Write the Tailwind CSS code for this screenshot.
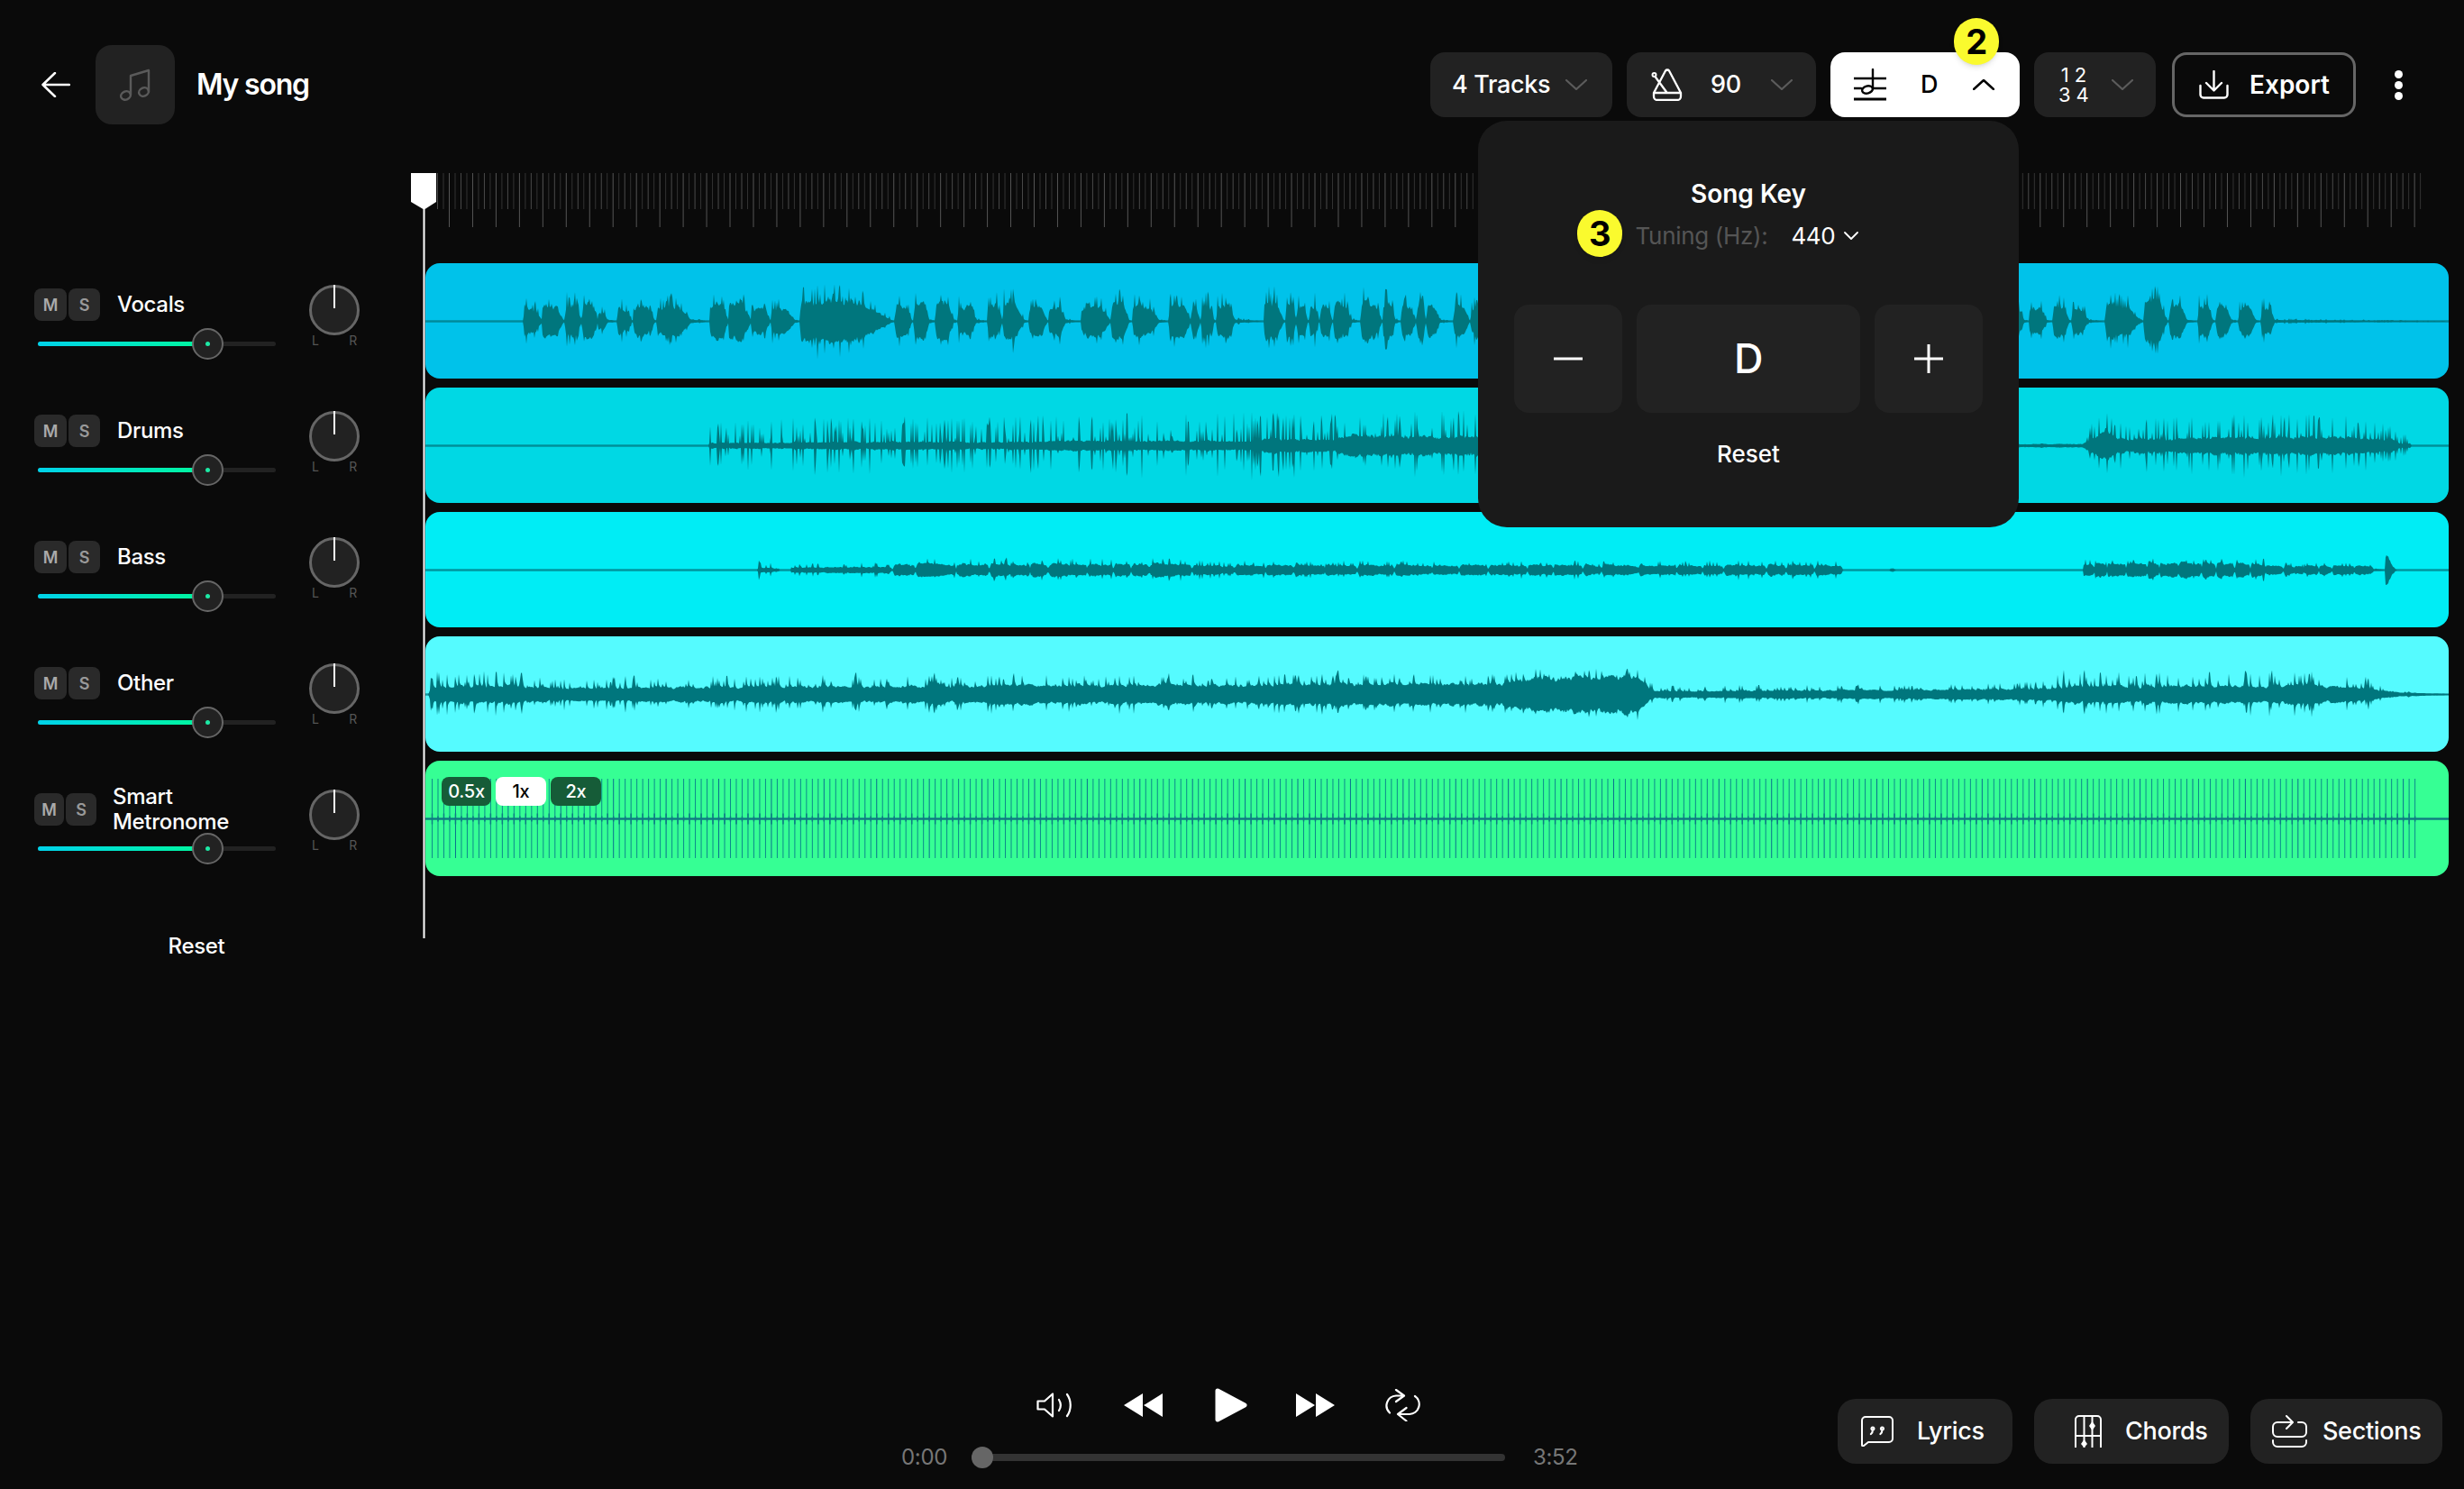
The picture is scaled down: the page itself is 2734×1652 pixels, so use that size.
<!DOCTYPE html>
<html lang="en">
<head>
    <meta charset="UTF-8">
    <title>My song</title>
    <script src="https://cdn.jsdelivr.net/npm/@tailwindcss/browser@4"></script>
</head>
<body class="bg-[#0a0a0a] overflow-hidden">
<div class="relative flex h-[1652px] w-[2734px] flex-col font-['Inter',sans-serif] tracking-[-0.02em] text-white">

    <!-- header -->
    <header class="mt-[50px] flex h-[88px] shrink-0 items-center pl-[46px] pr-[68px]">
        <svg class="h-[28px] w-[32px]" viewBox="0 0 32 28" fill="none" stroke="white" stroke-width="2.5" stroke-linecap="round" stroke-linejoin="round"><path d="M31 14H1.5M15 1 1.5 14 15 27"/></svg>
        <div class="ml-[28px] flex h-[88px] w-[88px] items-center justify-center rounded-[18px] bg-[#222222]">
            <svg class="h-[36px] w-[36px]" viewBox="0 0 36 36" fill="none" stroke="#5a5a5a" stroke-width="2.4" stroke-linecap="round" stroke-linejoin="round"><path d="M13 29V8l20-6v24"/><ellipse cx="7.5" cy="30" rx="5.5" ry="4.5" transform="rotate(-25 7.5 30)"/><ellipse cx="27.500" cy="26" rx="5.500" ry="4.500" transform="rotate(-25 27.500 26)"/></svg>
        </div>
        <h1 class="ml-[24px] text-[32px] font-semibold tracking-[-1.2px]">My song</h1>

        <div class="ml-auto flex items-center">
            <button class="flex h-[72px] w-[202px] items-center justify-between rounded-[16px] bg-[#222222] pl-[24px] pr-[28px] text-[27px] font-medium">
                4 Tracks
                <svg class="h-[12px] w-[24px]" viewBox="0 0 24 12" fill="none" stroke="#5c5c5c" stroke-width="2.2" stroke-linecap="round" stroke-linejoin="round"><path d="m1 1 11 10L23 1"/></svg>
            </button>
            <button class="ml-[16px] flex h-[72px] w-[210px] items-center rounded-[16px] bg-[#222222] pl-[27px] text-[27px] font-medium">
                <svg class="h-[36px] w-[36px]" viewBox="0 0 36 36" fill="none" stroke="white" stroke-width="2.3" stroke-linecap="round" stroke-linejoin="round"><path d="M16 2.500a2.500 2.500 0 0 1 4 0L33 27v4a4 4 0 0 1-4 4H7a4 4 0 0 1-4-4v-4zM3 27h30M4.500 9 17 26"/><circle cx="3.500" cy="7" r="2" stroke-width="2"/></svg>
                <span class="ml-[30px]">90</span>
                <svg class="ml-[33px] h-[12px] w-[24px]" viewBox="0 0 24 12" fill="none" stroke="#5c5c5c" stroke-width="2.2" stroke-linecap="round" stroke-linejoin="round"><path d="m1 1 11 10L23 1"/></svg>
            </button>
            <button class="ml-[16px] flex h-[72px] w-[210px] items-center rounded-[16px] bg-white pl-[26px] text-[27px] font-medium text-black">
                <svg class="h-[36px] w-[36px]" viewBox="0 0 36 36" fill="none" stroke="black" stroke-width="2.4" stroke-linecap="round"><path d="M0 11h36M0 22h8M21 22h15"/><path d="M0 34h36" stroke-width="2.8"/><path d="M21 1v21"/><ellipse cx="15" cy="23.500" rx="6" ry="4" transform="rotate(-15 15 23.500)"/></svg>
                <span class="ml-[38px]">D</span>
                <svg class="ml-[39px] h-[12px] w-[24px]" viewBox="0 0 24 12" fill="none" stroke="black" stroke-width="2.5" stroke-linecap="round" stroke-linejoin="round"><path d="M1 11 12 1l11 10"/></svg>
            </button>
            <button class="ml-[16px] flex h-[72px] w-[135px] items-center rounded-[16px] bg-[#222222] pl-[27px] text-[22px] leading-[22px]">
                <span class="flex flex-col"><span class="tracking-[6px]">12</span><span class="tracking-[6px]">34</span></span>
                <svg class="ml-[19px] h-[12px] w-[24px]" viewBox="0 0 24 12" fill="none" stroke="#5c5c5c" stroke-width="2.2" stroke-linecap="round" stroke-linejoin="round"><path d="m1 1 11 10L23 1"/></svg>
            </button>
            <button class="ml-[18px] flex h-[72px] w-[204px] items-center rounded-[16px] border-[3px] border-[#666666] pl-[27px] text-[28px] font-semibold tracking-normal">
                <svg class="h-[32px] w-[33px]" viewBox="0 0 33 32" fill="none" stroke="white" stroke-width="2.4" stroke-linecap="round" stroke-linejoin="round"><path d="M16.500 1v21M8 14l8.500 8.500L25 14M1.500 17v10a3.500 3.500 0 0 0 3.500 3.500h23a3.500 3.500 0 0 0 3.500-3.500V17"/></svg>
                <span class="ml-[23px]">Export</span>
            </button>
            <div class="ml-[43px] flex flex-col gap-[3px]">
                <span class="h-[9px] w-[9px] rounded-full bg-white"></span>
                <span class="h-[9px] w-[9px] rounded-full bg-white"></span>
                <span class="h-[9px] w-[9px] rounded-full bg-white"></span>
            </div>
        </div>
    </header>

    <main class="flex min-h-0 flex-1">
        <!-- mixer -->
        <aside class="w-[472px] shrink-0 pt-[178px]">
            <div id="mixer"></div>
            <div class="mt-[17px] w-[436px] text-center text-[24px] font-medium leading-[34px]">Reset</div>
        </aside>

        <!-- timeline -->
        <section class="relative mt-[54px] w-[2245px]">
            <svg id="ruler" class="block h-[60px] w-[2245px]" viewBox="0 0 2245 60"></svg>
            <div class="mt-[40px] flex flex-col gap-[10px]">
                <div class="h-[128px] overflow-hidden rounded-[16px] bg-[#00c2ea]"><svg id="w1" class="block h-full w-full" viewBox="0 0 2245 128"></svg></div>
                <div class="h-[128px] overflow-hidden rounded-[16px] bg-[#00d8e4]"><svg id="w2" class="block h-full w-full" viewBox="0 0 2245 128"></svg></div>
                <div class="h-[128px] overflow-hidden rounded-[16px] bg-[#00edf5]"><svg id="w3" class="block h-full w-full" viewBox="0 0 2245 128"></svg></div>
                <div class="h-[128px] overflow-hidden rounded-[16px] bg-[#55fbff]"><svg id="w4" class="block h-full w-full" viewBox="0 0 2245 128"></svg></div>
                <div class="relative h-[128px] overflow-hidden rounded-[16px] bg-[#36ff94]">
                    <svg id="w5" class="block h-full w-full" viewBox="0 0 2245 128"></svg>
                    <div class="absolute left-[18px] top-[18px] flex gap-[5px] text-[20px] font-medium">
                        <span class="flex h-[32px] w-[55px] items-center justify-center rounded-[8px] bg-[#165c38]">0.5x</span>
                        <span class="flex h-[32px] w-[56px] items-center justify-center rounded-[8px] bg-white text-black">1x</span>
                        <span class="flex h-[32px] w-[56px] items-center justify-center rounded-[8px] bg-[#165c38]">2x</span>
                    </div>
                </div>
            </div>
            <!-- playhead -->
            <svg class="absolute left-[-16px] top-0 h-[849px] w-[28px]" viewBox="0 0 28 849"><path d="M0 0h28v32L15.500 40v809h-2V40L0 32z" fill="white"/></svg>
        </section>
    </main>

    <!-- transport -->
    <footer class="flex h-[112px] shrink-0 pl-[1000px]">
        <div class="flex w-[760px] flex-col">
            <div class="ml-[150px] flex h-[38px] items-center">
                <svg class="h-[28px] w-[41px]" viewBox="0 0 41 28" fill="none" stroke="white" stroke-width="2.200" stroke-linecap="round" stroke-linejoin="round"><path d="M1.500 9.500H9L18 1.500v25l-9-8H1.500zM25 8c2.500 4 2.500 8 0 12M34 2c5 7 5 17 0 24"/></svg>
                <svg class="ml-[56px] h-[26px] w-[43px]" viewBox="0 0 43 26" fill="white"><path d="M21 0v26L0 13zM43 0v26L22 13z"/></svg>
                <svg class="ml-[58px] h-[38px] w-[36px]" viewBox="0 0 36 38" fill="white" stroke="white" stroke-width="5" stroke-linejoin="round"><path d="M3 3l30 16L3 35z"/></svg>
                <svg class="ml-[54px] h-[26px] w-[43px]" viewBox="0 0 43 26" fill="white"><path d="M0 0v26l21-13zM22 0v26l21-13z"/></svg>
                <svg class="ml-[55px] h-[36px] w-[40px]" viewBox="0 0 40 36" fill="none" stroke="white" stroke-width="2.200" stroke-linecap="round" stroke-linejoin="round"><path d="M13 1l9 6.500L13 14M21 7.500H13a11 11 0 0 0-7 19M24.500 21 15 28l9.500 7.500M16 28h12a11 11 0 0 0 6-20"/></svg>
            </div>
            <div class="mt-[27px] flex h-[24px] items-center text-[24px] text-[#777777]">
                <span class="w-[78px] shrink-0">0:00</span>
                <div class="relative h-[8px] w-[592px] shrink-0 rounded-full bg-[#333333]">
                    <span class="absolute left-0 top-[-8px] h-[24px] w-[24px] rounded-full bg-[#666666]"></span>
                </div>
                <span class="ml-[31px]">3:52</span>
            </div>
        </div>

        <div class="ml-[279px] mt-[12px] flex h-[72px] gap-[24px] text-[27px] font-medium">
            <button class="flex h-[72px] w-[194px] items-center rounded-[20px] bg-[#222222] pl-[26px]">
                <svg class="h-[34px] w-[36px]" viewBox="0 0 36 34" fill="none" stroke="white" stroke-width="2" stroke-linecap="round" stroke-linejoin="round"><path d="M5 1h26a4 4 0 0 1 4 4v20a4 4 0 0 1-4 4H8l-5 4a1.200 1.200 0 0 1-2-1V5a4 4 0 0 1 4-4z"/><path d="M13 15.500a1.500 1.500 0 1 0-.1 0c0 2-.8 3.500-2 4.500M23.500 15.500a1.500 1.500 0 1 0-.1 0c0 2-.8 3.500-2 4.500" stroke-width="2.200"/></svg>
                <span class="ml-[26px]">Lyrics</span>
            </button>
            <button class="flex h-[72px] w-[216px] items-center rounded-[20px] bg-[#222222] pl-[45px]">
                <svg class="h-[36px] w-[30px]" viewBox="0 0 30 36" fill="none" stroke="white" stroke-width="2"><path d="M1 36V5a4 4 0 0 1 4-4h20a4 4 0 0 1 4 4v31M10.500 1v35M19.500 1v35M1 23h28"/><path d="M19.500 7l3.500 5-3.500 5-3.500-5zM10.500 27l3.500 5-3.500 4-3.500-4z" fill="white" stroke="none"/></svg>
                <span class="ml-[26px]">Chords</span>
            </button>
            <button class="flex h-[72px] w-[213px] items-center rounded-[20px] bg-[#222222] pl-[24px]">
                <svg class="h-[36px] w-[39px]" viewBox="0 0 39 36" fill="none" stroke="white" stroke-width="2" stroke-linecap="round" stroke-linejoin="round"><path d="M22 8H6a5 5 0 0 0-5 5v6a5 5 0 0 0 5 5h27a5 5 0 0 0 5-5v-6a5 5 0 0 0-5-5h-4M16 1l7 7-7 7M1 28v2a5 5 0 0 0 5 5h27a5 5 0 0 0 5-5v-2"/></svg>
                <span class="ml-[17px]">Sections</span>
            </button>
        </div>
    </footer>

    <!-- song key popover -->
    <div class="absolute left-[1640px] top-[134px] flex h-[451px] w-[600px] flex-col items-center rounded-[32px] bg-[#1a1a1a] pt-[64px]">
        <h2 class="text-[28px] font-semibold leading-[34px] tracking-normal">Song Key</h2>
        <div class="mt-[12px] flex h-[34px] items-center pr-[3px] text-[26px]">
            <span class="text-[#555555]">Tuning (Hz):</span>
            <span class="ml-[26px]">440</span>
            <svg class="ml-[10px] h-[9px] w-[16px]" viewBox="0 0 16 9" fill="none" stroke="white" stroke-width="1.800" stroke-linecap="round" stroke-linejoin="round"><path d="m1 1 7 7 7-7"/></svg>
        </div>
        <div class="mt-[60px] flex gap-[16px]">
            <button class="flex h-[120px] w-[120px] items-center justify-center rounded-[16px] bg-[#222222]"><svg class="h-[32px] w-[32px]" viewBox="0 0 32 32" stroke="white" stroke-width="3"><path d="M0 16h32"/></svg></button>
            <button class="flex h-[120px] w-[248px] items-center justify-center rounded-[16px] bg-[#222222] text-[45px] font-medium">D</button>
            <button class="flex h-[120px] w-[120px] items-center justify-center rounded-[16px] bg-[#222222]"><svg class="h-[32px] w-[32px]" viewBox="0 0 32 32" stroke="white" stroke-width="3"><path d="M0 16h32M16 0v32"/></svg></button>
        </div>
        <div class="mt-[29px] text-[26px] font-medium leading-[34px] tracking-normal">Reset</div>
    </div>

    <!-- annotation badges -->
    <span class="absolute left-[2168px] top-[20px] flex h-[52px] w-[50px] items-center justify-center rounded-full bg-[#fafa2e] text-[38px] font-bold text-black shadow-md">2</span>
    <span class="absolute left-[1750px] top-[233px] flex h-[52px] w-[50px] items-center justify-center rounded-full bg-[#fafa2e] text-[38px] font-bold text-black shadow-md">3</span>
</div>

<template id="row">
    <div class="flex h-[140px] pl-[38px]">
        <div class="w-[268px] pt-[4px]">
            <div class="flex h-[36px] items-center gap-[2px] text-[18px] font-semibold">
                <span data-m class="flex h-[36px] w-[36px] shrink-0 items-center justify-center rounded-[8px] bg-[#2a2a2a] text-[#aaaaaa]">M</span>
                <span data-s class="flex h-[36px] w-[35px] shrink-0 items-center justify-center rounded-[8px] bg-[#2a2a2a] text-[#999999]">S</span>
                <span data-name class="ml-[17px] text-[24px] font-medium leading-[28px] text-white"></span>
            </div>
            <div class="relative ml-[4px] mt-[8px] flex h-[35px] w-[264px] items-center">
                <div class="h-[5px] w-full rounded-full bg-[#222222]">
                    <div class="h-full w-[175px] rounded-full bg-gradient-to-r from-[#00d2ea] to-[#00f5a0]"></div>
                </div>
                <span class="absolute left-[171px] top-0 flex h-[35px] w-[35px] items-center justify-center rounded-full border-2 border-[#666666] bg-[#222222]"><span class="h-[5px] w-[5px] rounded-full bg-[#1de9a5]"></span></span>
            </div>
        </div>
        <div class="ml-[37px] w-[56px]">
            <div class="relative h-[56px] w-[56px] rounded-full border-[3px] border-[#666666] bg-[#222222]">
                <span class="absolute left-[24px] top-[-3px] h-[26px] w-[2px] bg-white"></span>
            </div>
            <div class="mt-[-1px] flex justify-between px-[3px] text-[14px] leading-[14px] text-[#555555]"><span>L</span><span>R</span></div>
        </div>
    </div>
</template>

<script>
// mixer rows
var names = ['Vocals', 'Drums', 'Bass', 'Other', 'Smart Metronome'];
var mixer = document.getElementById('mixer');
var tpl = document.getElementById('row');
names.forEach(function (n, i) {
    var row = tpl.content.cloneNode(true);
    var label = row.querySelector('[data-name]');
    label.textContent = n;
    if (i === 4) {
        row.querySelector('[data-m]').className = 'flex h-[36px] w-[33px] shrink-0 items-center justify-center rounded-[8px] bg-[#2a2a2a] text-[#aaaaaa]';
        row.querySelector('[data-s]').className = 'flex h-[36px] w-[34px] shrink-0 items-center justify-center rounded-[8px] bg-[#2a2a2a] text-[#999999]';
        label.className = 'ml-[16px] w-[140px] text-[24px] font-medium leading-[28px] text-white';
    }
    mixer.appendChild(row);
});

// ruler ticks
var NS = 'http://www.w3.org/2000/svg';
function add(svg, tag, attrs) {
    var el = document.createElementNS(NS, tag);
    for (var k in attrs) el.setAttribute(k, attrs[k]);
    svg.appendChild(el);
    return el;
}
var ruler = document.getElementById('ruler');
for (var i = -2; 498 + i * 6.49 < 2686; i++) {
    var x = 498 + i * 6.49 - 472;
    var major = ((i % 4) + 4) % 4 === 0;
    add(ruler, 'rect', { x: x.toFixed(2), y: 0, width: 1, height: major ? 60 : 40, fill: major ? '#555' : (i % 2 === 0 ? '#4a4a4a' : '#333') });
}

// waveforms, generated from seeded noise so they stay the same each run
function rng(seed) {
    return function () {
        seed = (seed * 1664525 + 1013904223) % 4294967296;
        return seed / 4294967296;
    };
}
function env(pts, x) {
    for (var i = 1; i < pts.length; i++) {
        if (x <= pts[i][0]) {
            var a = pts[i - 1], b = pts[i], t = (x - a[0]) / ((b[0] - a[0]) || 1);
            if (t < 0) return [0, 0];
            return [a[1] + (b[1] - a[1]) * t, a[2] + (b[2] - a[2]) * t];
        }
    }
    return [0, 0];
}
function burst(x0, x1, a) {
    var w = x1 - x0;
    return [[x0 - 0.5, 0, 0], [x0 + 0.5, a * 0.5, a * 1.05], [x0 + w * 0.2, a * 0.58, a * 1.05], [x0 + w * 0.65, a * 0.55, a], [x1, a * 0.06, a * 0.15]];
}
function bursts(list) {
    var out = [[0, 0, 0]];
    list.forEach(function (b) { out = out.concat(burst(b[0], b[1], b[2])); });
    out.push([2734, 0, 0]);
    return out;
}
function drawWave(id, pts, p, smooth, seed) {
    var svg = document.getElementById(id), r = rng(seed), top = [], bot = [], pt = 0, pb = 0, slow = 0.5;
    for (var x = 472; x <= 2717; x++) {
        var e = env(pts, x), core = e[0], spike = e[1];
        slow = slow * 0.72 + r() * 0.28;
        var m = 0.55 + 0.9 * slow;
        var t = core * m * (0.8 + 0.2 * r()), b = core * m * (0.8 + 0.2 * r());
        if (r() < p) { var s = Math.sqrt(r()); t = Math.max(t, spike * s); if (r() < 0.75) b = Math.max(b, spike * s * (0.7 + 0.35 * r())); }
        pt = pt * smooth + t * (1 - smooth);
        pb = pb * smooth + b * (1 - smooth);
        top.push(pt); bot.push(pb);
    }
    var d = 'M0 64.500';
    top.forEach(function (v, i) { d += 'L' + i + ' ' + (64.5 - v).toFixed(1); });
    for (var j = bot.length - 1; j >= 0; j--) d += 'L' + j + ' ' + (64.5 + bot[j]).toFixed(1);
    add(svg, 'rect', { x: 0, y: 63.3, width: 2245, height: 2.4, fill: '#00767d', opacity: 0.75 });
    add(svg, 'path', { d: d + 'Z', fill: '#00767d' });
}

drawWave('w1', bursts([
    [581, 601, 26], [601, 625, 30], [627, 645, 34], [646, 663, 32], [663, 674, 20], [685, 701, 26], [703, 726, 32], [729, 766, 32],
    [788, 808, 36], [808, 833, 38], [833, 855, 24], [855, 882, 26], [888, 987, 42], [993, 1011, 36], [1014, 1031, 36], [1038, 1058, 36],
    [1063, 1083, 32], [1096, 1112, 34], [1113, 1136, 38], [1142, 1162, 32], [1164, 1182, 30],
    [1200, 1232, 30], [1233, 1252, 38], [1257, 1286, 32], [1297, 1321, 32], [1322, 1332, 26], [1333, 1347, 34], [1350, 1370, 34],
    [1403, 1424, 40], [1427, 1438, 36], [1439, 1451, 34], [1453, 1463, 34], [1465, 1478, 34], [1480, 1500, 36],
    [1510, 1533, 38], [1535, 1548, 36], [1555, 1570, 34], [1572, 1582, 36], [1583, 1597, 30], [1613, 1630, 32], [1632, 1650, 30],
    [2230, 2246, 25], [2252, 2271, 26], [2278, 2296, 32], [2299, 2317, 26], [2336, 2374, 32], [2379, 2404, 44], [2407, 2427, 30],
    [2439, 2455, 32], [2459, 2476, 30], [2484, 2503, 30], [2509, 2524, 26]
]), 0.45, 0.08, 11);

drawWave('w2', [[0, 0, 0], [786, 0, 0], [787, 3, 28], [900, 4, 32], [1000, 5, 34], [1100, 4, 32], [1200, 6, 36], [1390, 5, 38], [1392, 9, 38], [1480, 7, 36], [1490, 12, 38], [1641, 11, 40],
    [2240, 2, 2], [2310, 2, 2], [2322, 8, 30], [2335, 16, 40], [2360, 8, 30], [2500, 10, 38], [2600, 10, 38], [2655, 7, 22], [2662, 3, 14], [2674, 3, 14], [2676, 0, 0], [2734, 0, 0]], 0.3, 0, 23);

var bass = [[0, 0, 0], [840, 0, 0], [841, 3, 14], [862, 2, 10], [865, 0, 0], [877, 0, 0], [878, 3, 9], [987, 4, 9], [990, 0, 0]];
var br = rng(7), bx = 993;
while (bx < 2040) {
    var len = 14 + br() * 30, amp = bx < 1300 ? 10 : 8;
    bass.push([bx, amp * 0.8, amp * 1.5], [bx + len, amp * 0.6, amp * 1.3], [bx + len + 1.5, 1, 3]);
    bx += len + 4;
}
bass.push([2042, 0, 0], [2096, 0, 0], [2100, 2, 5], [2104, 0, 0], [2311, 0, 0]);
bx = 2311;
while (bx < 2630) {
    var l2 = 10 + br() * 14, a2 = bx < 2500 ? 9 : 6;
    bass.push([bx, a2, a2 * 1.5], [bx + l2, a2 * 0.7, a2 * 1.5], [bx + l2 + 1.5, 1, 3]);
    bx += l2 + 2.5;
}
bass.push([2640, 1, 1], [2646, 0, 0], [2647, 18, 24], [2658, 1, 1], [2660, 0, 0], [2734, 0, 0]);
drawWave('w3', bass, 0.22, 0.1, 37);

drawWave('w4', [[0, 0, 0], [475, 0, 0], [477, 9, 34], [520, 9, 32], [560, 10, 34], [620, 7, 22], [700, 8, 26], [900, 9, 26], [1000, 10, 26], [1130, 11, 28], [1300, 11, 26],
    [1500, 12, 28], [1674, 13, 28], [1692, 20, 34], [1815, 21, 34], [1835, 4, 14], [2110, 5, 13], [2200, 6, 15], [2278, 7, 20], [2282, 9, 32], [2420, 10, 30], [2590, 10, 32],
    [2625, 6, 28], [2650, 3, 6], [2700, 1, 1], [2734, 0, 0]], 0.25, 0.3, 53);

// metronome track: evenly spaced clicks
var w5 = document.getElementById('w5');
add(w5, 'rect', { x: 0, y: 63.3, width: 2245, height: 2.4, fill: '#0f7a80' });
var n = 0;
for (var cx = 479; cx < 2681; cx += 6.49) {
    var bump = n % 2 === 0 ? 6 : 3;
    add(w5, 'rect', { x: (cx - 472).toFixed(2), y: 20, width: 1, height: 88, fill: n % 9 === 4 ? '#0b6f8f' : '#0d8a8c' });
    add(w5, 'rect', { x: (cx - 472.25).toFixed(2), y: 64.5 - bump, width: 1.5, height: bump * 2, fill: '#0e7a84' });
    n++;
}
</script>
</body>
</html>
